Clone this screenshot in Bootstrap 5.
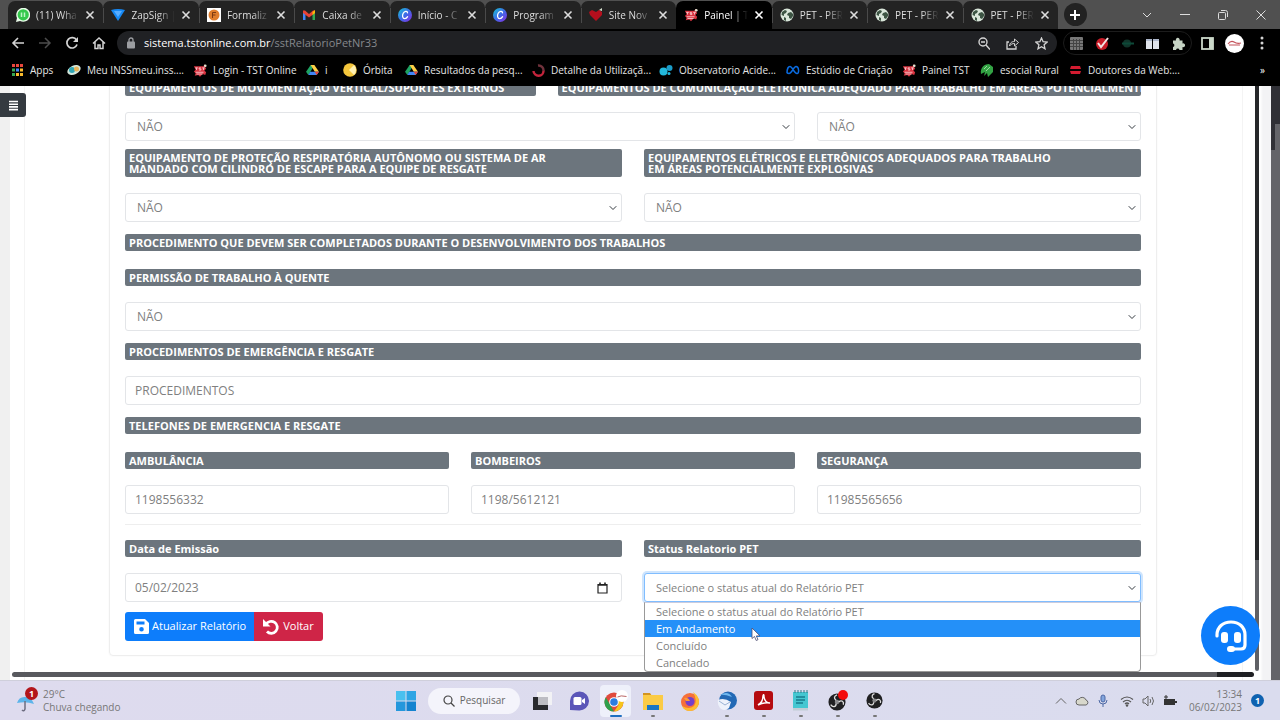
<!DOCTYPE html>
<html lang="pt-br">
<head>
<meta charset="utf-8">
<meta name="viewport" content="width=device-width, initial-scale=1">
<title>Painel | TST Online</title>
<link href="https://cdn.jsdelivr.net/npm/bootstrap@5.3.0/dist/css/bootstrap.min.css" rel="stylesheet">
<style>
body{font-family:"Open Sans","Noto Sans",sans-serif;font-size:12px;line-height:16px;background:#fff}
button{font-family:inherit}
svg{flex:none;display:block}
.bare{background:none;border:0;padding:0;color:inherit}
/* browser chrome */
.tabstrip{height:29px;background:#505050;padding-left:8px}
.tabitem{flex:1 1 0;min-width:0;height:28px;background:#232323;color:#ddd;padding:0 8px;gap:6px;border-radius:7px 7px 0 0;font-size:10px;position:relative}
.tabitem+.tabitem::before{content:"";position:absolute;left:0;top:7px;height:15px;border-left:1px solid #4a4a4a}
.tabitem.current{background:#000;color:#fff}
.tabitem.current::before{display:none}
.tabitem .caption{flex:1;min-width:0;overflow:hidden;white-space:nowrap;-webkit-mask-image:linear-gradient(90deg,#000 60%,transparent)}
.winctl{width:222px;color:#ddd}
.winctl>*{width:38px;display:flex;justify-content:center}
.newtab{width:23px!important;height:23px;border-radius:50%;background:#222!important;align-items:center;margin-left:6px;margin-right:41px}
.toolbar{height:28px;background:#000;color:#d4d4d4}
.navicons{width:117px;padding-left:11px;gap:13px}
.omnibox{flex:1;height:24px;border-radius:12px;background:#202124;padding:0 9px;font-size:11px;color:#85888c}
.omnibox .tools{color:#d4d4d4}
.exts{width:129px;height:24px;border:1px solid #1c1c1c;border-radius:12px;margin:0 9px 0 6px}
.avatar{margin-left:11px}
.bookmarks{height:29px;background:#000;display:grid;grid-template-columns:56px 126px 113px 37px 62px 127px 127px 127px 116px 78px 89px 1fr auto;align-items:center;padding:0 15px 3px 11px;font-size:10px}
.bookmarks a{color:#e6e6e6;text-decoration:none;display:flex;align-items:center;gap:6px;white-space:nowrap}
/* page */
.viewport{position:relative;overflow:hidden;flex:1 1 0;min-height:0}
.edge{width:10px;background:#f0f0f0}
.inner{margin:0 12px 0 14px;border:solid #f4f4f4;border-width:0 1px;padding:0 85px 24px 84px;overflow:hidden;min-width:0}
.formcard{border:1px solid #eee;border-radius:4px;padding:15px 15px 14px;box-shadow:0 0 2px #f3f3f3}
.formcard .row{--bs-gutter-x:22px}
.tag{display:block;background:#6c757d;color:#fff;font-weight:700;font-size:11px;line-height:11px;padding:3px 4px;border-radius:2px;overflow:hidden}
.tag.oneline{white-space:nowrap}
.gap-field{margin-bottom:16px}
.gap-tag{margin-bottom:18px}
.gap-next{margin-bottom:12px}
.gap-tight{margin-bottom:10px}
.field.form-control,.field.form-select{height:29px;padding:0 9px;border:1px solid #e3e5e8;border-radius:3px;font-size:12px;color:#808080;line-height:16px}
.field.form-select{padding-left:11px;background-size:8px 8px;background-position:right 4px center}
.field.opened{border-color:#80bdff;box-shadow:0 0 0 2px #cfe5fd}
.statusbox,.statusbox .field.form-select{font-size:11px}
.rule{margin:0 0 15px;border-top:1px solid #eee;opacity:1}
.choices{position:absolute;top:100%;left:0;right:0;z-index:5;background:#fff;border:1px solid #999;border-top-color:#ccd;border-radius:0 0 4px 4px;color:#808080;list-style:none;margin:0;padding:0}
.choices li{padding:0 11px;height:17px;line-height:17px}
.choices .on{background:#2490f8;color:#fff}
.pointer{position:absolute;left:107px;top:54px;z-index:6}
.act{height:29px;padding:0 9px;font-size:11px;border:0;border-radius:3px;display:flex;align-items:center;gap:3px;color:#fff!important}
.act.save{background:#0d7dfb}
.act.back{background:#cf2547}
.actions{margin-top:10px}
.menu{position:absolute;left:0;top:7px;width:26px;height:24px;background:#343a40;border:0;border-radius:0 3px 3px 0;padding:0}
.help{position:absolute;right:20px;bottom:15px;width:59px;height:59px;border-radius:50%;background:#0d7dfb;border:0;display:flex;align-items:center;justify-content:center;padding:0;z-index:6}
.vbar{width:4px;margin-bottom:9px;background:linear-gradient(#26272a 81%,#5f6065 81%);border-radius:0 0 2px 2px}
.hbar{position:absolute;left:12px;right:26px;bottom:3px;height:5px;border-radius:3px;background:linear-gradient(90deg,#58595e 97%,#1f2023 97%);z-index:2}
.lane{width:12px;background:linear-gradient(90deg,#fff 1px,#f3f3f5 4px)}
.outer{width:9px;background:linear-gradient(#303036 64px,#646469 64px);position:relative}
.outer::before{content:"";position:absolute;right:0;top:38px;width:5px;height:26px;background:#646469}
/* taskbar */
.taskbar{flex:none;height:40px;background:linear-gradient(90deg,#dedbee,#dadcee);border-top:1px solid #cfcfdb;font-size:10px;line-height:13px;color:#777}
.side{flex:1 1 0}
.apps>*{width:37px;display:flex;justify-content:center;align-items:center;height:34px;position:relative}
.apps .run::after{content:"";position:absolute;bottom:1px;width:4px;height:2px;border-radius:1px;background:#777}
.apps .front::before{content:"";position:absolute;inset:1px 3px;background:#eef0fa;border-radius:4px}
.apps .front::after{width:12px;background:#1f6fc0}
.apps svg{position:relative}
.apps .finder{width:92px;height:26px;border-radius:13px;background:#f4f4fb;margin:0 3px 0 4px;gap:5px;font-size:10px;color:#666}
.notice{background:#0f62b0;color:#fff;width:13px;height:13px;border-radius:50%;text-align:center;font-size:9px;font-weight:700;margin:0 16px 0 9px}
.alertdot{position:absolute;left:9px;top:-2px;width:13px;height:13px;border-radius:50%;background:#b3161b;color:#fff;text-align:center;font-size:9px;font-weight:700}
</style>
</head>
<body class="vh-100 d-flex flex-column overflow-hidden">
<svg width="0" height="0" class="position-absolute" aria-hidden="true">
<defs>
<linearGradient id="canvaFill" x1="0" y1="0" x2="1" y2="1"><stop offset="0" stop-color="#17c8d4"/><stop offset=".5" stop-color="#3d6be8"/><stop offset="1" stop-color="#8a2be2"/></linearGradient>
<symbol id="x" viewBox="0 0 10 10"><path d="M1.500 1.500l7 7m0-7l-7 7" stroke="currentColor" stroke-width="1.600"/></symbol>
<symbol id="canva" viewBox="0 0 14 14"><circle cx="7" cy="7" r="7" fill="url(#canvaFill)"/><path d="M9.500 4.800C9.300 2.600 6.400 3 5.200 5.300 3.900 7.800 4.600 10.600 6.700 10.600c1.400 0 2.300-.9 2.900-1.900" fill="none" stroke="#fff" stroke-width="1.300" stroke-linecap="round"/></symbol>
<symbol id="globe" viewBox="0 0 14 14"><circle cx="7" cy="7" r="6.500" fill="#d9e6da"/><path d="M2 4l3-2 2 1-1 2-2 1v2L1.500 7zM8 5l3-1 2 2v2l-2 3-2-1 0-2-2-1zM4 9l2 1v3l-2-1z" fill="#3d5544"/></symbol>
<symbol id="tst" viewBox="0 0 16 14"><path d="M1 2h11l1-2 2 1-1 2 1 2-2 2 2 2-1 3-3-1-3 3-2-2-4 1 1-3-2-2 2-2z" fill="#d93340"/><path d="M2.500 4h3M4 4v2.500M9 4H7v1.200h2v1.300H7M10.500 4h3M12 4v2.500M3 9h9M4 11h7" fill="none" stroke="#f8c9cd"/><circle cx="14" cy="1.500" r="1.500" fill="#dfe8d5"/></symbol>
<symbol id="drive" viewBox="0 0 14 13"><path d="M5 1h4l-4.500 8L2.500 12 0 8.500z" fill="#1ea362"/><path d="M5 1h4l5 7.500h-4.500z" fill="#ffcf45"/><path d="M4.500 8.500H14L11.500 12h-9z" fill="#4285f4"/><path d="M9.500 8.500H14L11.500 12z" fill="#ea4335"/></symbol>
<symbol id="obs" viewBox="0 0 20 20"><circle cx="10" cy="10" r="9.500" fill="#202022"/><circle cx="10" cy="10" r="2.500" fill="#89898c"/><path d="M9 8C6 6 7 3 10 2M12 10c3-3 6 0 5 3M9 12c0 4-4 4-6 1" fill="none" stroke="#ddd" stroke-width="1.500"/></symbol>
</defs>
</svg>

<header class="flex-shrink-0">
<div class="tabstrip d-flex align-items-end" role="tablist">
<div class="tabitem d-flex align-items-center" role="tab"><svg width="14" height="14" viewBox="0 0 14 14"><path d="M0 14l1-4a7 7 0 1 1 3 3z" fill="#e9fbe9"/><circle cx="7.200" cy="6.800" r="5.600" fill="#35c84c"/><path d="M5.500 4.500v4.500M8.500 4.500v4.500" stroke="#bdf5c5" stroke-width="1.500"/></svg><span class="caption">(11) Wha</span><button class="bare" aria-label="Fechar"><svg width="10" height="10"><use href="#x"/></svg></button></div>
<div class="tabitem d-flex align-items-center" role="tab"><svg width="14" height="14" viewBox="0 0 14 14"><path d="M0 2q7-2 14 0L7 13z" fill="#1689f5"/><path d="M3 3h8L7 9z" fill="#58adff"/></svg><span class="caption">ZapSign |</span><button class="bare" aria-label="Fechar"><svg width="10" height="10"><use href="#x"/></svg></button></div>
<div class="tabitem d-flex align-items-center" role="tab"><svg width="14" height="14" viewBox="0 0 14 14"><path d="M0 0h14v14H0z" fill="#fff"/><circle cx="7" cy="7" r="5.500" fill="#df7d2c"/><path d="M5.500 10V4.500h3.500M5.500 7h3" stroke="#7c3a12" fill="none"/></svg><span class="caption">Formaliz</span><button class="bare" aria-label="Fechar"><svg width="10" height="10"><use href="#x"/></svg></button></div>
<div class="tabitem d-flex align-items-center" role="tab"><svg width="14" height="14" viewBox="0 0 14 14"><path d="M1 12V4h2.500v8z" fill="#4285f4"/><path d="M10.500 12V4H13v8z" fill="#34a853"/><path d="M1 5V2.500l2 0 4 3.500 4-3.500 2 0V5L7 9.500z" fill="#ea4335"/><path d="M10.500 4L13 2v3l-2.500 2z" fill="#fbbc04"/></svg><span class="caption">Caixa de</span><button class="bare" aria-label="Fechar"><svg width="10" height="10"><use href="#x"/></svg></button></div>
<div class="tabitem d-flex align-items-center" role="tab"><svg width="14" height="14"><use href="#canva"/></svg><span class="caption">Início - C</span><button class="bare" aria-label="Fechar"><svg width="10" height="10"><use href="#x"/></svg></button></div>
<div class="tabitem d-flex align-items-center" role="tab"><svg width="14" height="14"><use href="#canva"/></svg><span class="caption">Program</span><button class="bare" aria-label="Fechar"><svg width="10" height="10"><use href="#x"/></svg></button></div>
<div class="tabitem d-flex align-items-center" role="tab"><svg width="14" height="14" viewBox="0 0 14 14"><path d="M7 13L1 7l-1-3 3-2 4 2 3-2 3 2v3z" fill="#b50f1d"/><path d="M10 2l3-2v3z" fill="#d5dfcc"/></svg><span class="caption">Site Nov</span><button class="bare" aria-label="Fechar"><svg width="10" height="10"><use href="#x"/></svg></button></div>
<div class="tabitem current d-flex align-items-center" role="tab" aria-selected="true"><svg width="14" height="14"><use href="#tst"/></svg><span class="caption">Painel | T</span><button class="bare" aria-label="Fechar"><svg width="10" height="10"><use href="#x"/></svg></button></div>
<div class="tabitem d-flex align-items-center" role="tab"><svg width="14" height="14"><use href="#globe"/></svg><span class="caption">PET - PER</span><button class="bare" aria-label="Fechar"><svg width="10" height="10"><use href="#x"/></svg></button></div>
<div class="tabitem d-flex align-items-center" role="tab"><svg width="14" height="14"><use href="#globe"/></svg><span class="caption">PET - PER</span><button class="bare" aria-label="Fechar"><svg width="10" height="10"><use href="#x"/></svg></button></div>
<div class="tabitem d-flex align-items-center" role="tab"><svg width="14" height="14"><use href="#globe"/></svg><span class="caption">PET - PER</span><button class="bare" aria-label="Fechar"><svg width="10" height="10"><use href="#x"/></svg></button></div>
<div class="winctl d-flex align-items-center align-self-center">
<button class="bare newtab" aria-label="Nova guia"><svg width="12" height="12" viewBox="0 0 12 12"><path d="M6 1v10M1 6h10" stroke="#fff" stroke-width="2"/></svg></button>
<button class="bare" aria-label="Pesquisar guias"><svg width="10" height="10" viewBox="0 0 10 10"><path d="M1 3l4 4 4-4" fill="none" stroke="currentColor"/></svg></button>
<button class="bare" aria-label="Minimizar"><svg width="10" height="10" viewBox="0 0 10 10"><path d="M0 4.500h10" stroke="currentColor"/></svg></button>
<button class="bare" aria-label="Restaurar"><svg width="10" height="10" viewBox="0 0 10 10"><rect x=".5" y="2.500" width="7" height="7" rx="1" fill="none" stroke="currentColor"/><path d="M3 .5h4.500a2 2 0 0 1 2 2V7" fill="none" stroke="currentColor"/></svg></button>
<button class="bare" aria-label="Fechar janela"><svg width="10" height="10" viewBox="0 0 10 10"><path d="M.5.5l9 9m0-9l-9 9" stroke="currentColor"/></svg></button>
</div>
</div>

<div class="toolbar d-flex align-items-center">
<div class="navicons d-flex align-items-center">
<button class="bare" aria-label="Voltar"><svg width="14" height="14" viewBox="0 0 14 14"><path d="M13 7H2m5-5L2 7l5 5" fill="none" stroke="currentColor" stroke-width="1.600"/></svg></button>
<button class="bare" aria-label="Avançar"><svg width="14" height="14" viewBox="0 0 14 14"><path d="M1 7h11M7 2l5 5-5 5" fill="none" stroke="#4c4c4c" stroke-width="1.500"/></svg></button>
<button class="bare" aria-label="Recarregar"><svg width="14" height="14" viewBox="0 0 14 14"><path d="M11.500 4A5.200 5.200 0 1 0 12 8.500" fill="none" stroke="currentColor" stroke-width="1.700"/><path d="M13 1v5H8z" fill="currentColor"/></svg></button>
<button class="bare" aria-label="Início"><svg width="14" height="14" viewBox="0 0 14 14"><path d="M1 7.500L7 2l6 5.500M3 6v6.500h3V9h2v3.500h3V6" fill="none" stroke="currentColor" stroke-width="1.500"/></svg></button>
</div>
<div class="omnibox d-flex align-items-center">
<svg width="10" height="12" viewBox="0 0 10 12" class="me-2"><rect x="1" y="4.500" width="8" height="7" rx="1" fill="#9c9ea2"/><path d="M3 5V3a2 2 0 0 1 4 0v2" fill="none" stroke="#9c9ea2" stroke-width="1.300"/></svg>
<span class="flex-grow-1" role="textbox" aria-label="Endereço"><span class="text-white">sistema.tstonline.com.br</span>/sstRelatorioPetNr33</span>
<div class="tools d-flex gap-3 align-items-center">
<svg width="12" height="13" viewBox="0 0 12 13"><circle cx="5" cy="5" r="4" fill="none" stroke="currentColor" stroke-width="1.400"/><path d="M8 8l4 4.500M3 5h4" stroke="currentColor" stroke-width="1.400"/></svg>
<svg width="13" height="13" viewBox="0 0 13 13"><path d="M3 5H1v7h9V9" fill="none" stroke="currentColor" stroke-width="1.300"/><path d="M3.500 9C4 5.500 6 4.500 8.500 4.500V2L12.500 5.500 8.500 9V6.500C6.500 6.500 5 7 3.500 9z" fill="none" stroke="currentColor"/></svg>
<svg width="13" height="13" viewBox="0 0 13 13"><path d="M6.500 1l1.600 3.700 4 .4-3 2.700.9 4-3.500-2.100L3 11.800l.9-4-3-2.700 4-.4z" fill="none" stroke="currentColor" stroke-width="1.300"/></svg>
</div></div>
<div class="exts d-flex align-items-center justify-content-around">
<svg width="13" height="13" viewBox="0 0 13 13"><rect width="13" height="13" rx="1" fill="#777"/><path d="M0 3.500h13M0 6.500h13M0 9.500h13M3.500 2v11M6.500 2v11M9.500 2v11" stroke="#444"/></svg>
<svg width="13" height="13" viewBox="0 0 13 13"><circle cx="6" cy="7" r="6" fill="#c71c28"/><path d="M2 6l3 4 7-9" fill="none" stroke="#f2e3e3" stroke-width="2"/></svg>
<svg width="13" height="13" viewBox="0 0 13 13"><circle cx="6" cy="6.500" r="4" fill="#10352a"/><path d="M1 6.500h12" stroke="#0d4938" stroke-width="2"/></svg>
<svg width="13" height="13" viewBox="0 0 13 13"><path d="M0 2h6v10H0zM7 2h6v10H7z" fill="#dfe3ea"/><path d="M0 2h6v2H0zM7 2h6v2H7z" fill="#aeb8cc"/></svg>
<svg width="13" height="13" viewBox="0 0 13 13"><path d="M1 3.500h3a1.900 1.900 0 1 1 3.500 0h3v3a1.900 1.900 0 1 1 0 3.500v3H7.500a1.800 1.800 0 0 0-3.500 0H1V10a1.800 1.800 0 0 0 0-3.500z" fill="#c6d3c4"/></svg>
</div>
<svg width="13" height="13" viewBox="0 0 13 13"><rect x="1" y="1" width="11" height="11" fill="none" stroke="#cbd8c9" stroke-width="1.800"/><path d="M8 1h4v11H8z" fill="#cbd8c9"/></svg>
<svg class="avatar" width="19" height="19" viewBox="0 0 19 19"><circle cx="9.500" cy="9.500" r="9.500" fill="#fff"/><path d="M3 10q3-4 6-2t7 1M4 11h11" fill="none" stroke="#c4525a" stroke-width="1.200"/></svg>
<svg width="4" height="14" viewBox="0 0 4 14" class="ms-3 me-3"><circle cx="2" cy="2" r="1.500" fill="currentColor"/><circle cx="2" cy="7" r="1.500" fill="currentColor"/><circle cx="2" cy="12" r="1.500" fill="currentColor"/></svg>
</div>

<nav class="bookmarks" aria-label="Favoritos">
<a href="#"><svg width="13" height="12" viewBox="0 0 13 12"><path d="M1 0h3v3H1zM5 0h3v3H5zM9 0h3v3H9z" fill="#e9473d"/><path d="M1 4.500h3v3H1z" fill="#35a853"/><path d="M5 4.500h3v3H5z" fill="#4285f4"/><path d="M9 4.500h3v3H9z" fill="#f9bb2d"/><path d="M1 9h3v3H1z" fill="#35a853"/><path d="M5 9h3v3H5zM9 9h3v3H9z" fill="#f9bb2d"/></svg>Apps</a>
<a href="#"><svg width="14" height="12" viewBox="0 0 14 12"><ellipse cx="7" cy="6" rx="7" ry="4.500" transform="rotate(-25 7 6)" fill="#d5e8dc"/><circle cx="5" cy="6" r="3" fill="#31a7b5"/><circle cx="9.500" cy="5" r="2.500" fill="#e8b45a"/></svg>Meu INSSmeu.inss....</a>
<a href="#"><svg width="14" height="13"><use href="#tst"/></svg>Login - TST Online</a>
<a href="#"><svg width="13" height="12"><use href="#drive"/></svg>i</a>
<a href="#"><svg width="14" height="14" viewBox="0 0 14 14"><circle cx="7" cy="7" r="6.800" fill="#f4c63c"/><path d="M11 2L6 7l5 5a7 7 0 0 0 0-10z" fill="#fff1b3"/></svg>Órbita</a>
<a href="#"><svg width="13" height="12"><use href="#drive"/></svg>Resultados da pesq...</a>
<a href="#"><svg width="13" height="13" viewBox="0 0 13 13"><path d="M1.500 7a5 5 0 0 0 10-.5" fill="none" stroke="#c4243c" stroke-width="2.400"/><path d="M6 1.500A5 5 0 0 1 11.500 7" fill="none" stroke="#71323c" stroke-width="2.400"/></svg>Detalhe da Utilizaçã...</a>
<a href="#"><svg width="14" height="12" viewBox="0 0 14 12"><circle cx="4.500" cy="7.500" r="4" fill="#22b8dc"/><circle cx="10.500" cy="4" r="3" fill="#1b9cc8"/><circle cx="10" cy="9.500" r="1.500" fill="#22b8dc"/></svg>Observatorio Acide...</a>
<a href="#"><svg width="14" height="10" viewBox="0 0 14 10"><path d="M1 8C1 4 2.500 1.500 4 1.500 6.500 1.500 8 8.500 11 8.500c2.500 0 2-7-1-7-2.500 0-4 7-7 7C1.500 8.500 1 8 1 7" fill="none" stroke="#0a6be0" stroke-width="1.500"/></svg>Estúdio de Criação</a>
<a href="#"><svg width="14" height="13"><use href="#tst"/></svg>Painel TST</a>
<a href="#"><svg width="14" height="13" viewBox="0 0 14 13"><path d="M1 10C0 4 4 0 9 0l4 3v5l-5 5-1-4-3 3 1-4z" fill="#33a344"/><path d="M4 5l3-3M6 7l4-4" stroke="#9bd7a0"/></svg>esocial Rural</a>
<a href="#"><svg width="13" height="12" viewBox="0 0 13 12"><path d="M2 2h9l1 3H1zM1 7h11l-1 3H2z" fill="#d31b30"/></svg>Doutores da Web:...</a>
<button class="bare text-white" aria-label="Mais favoritos">»</button>
</nav>
</header>

<main class="viewport d-flex">
<div class="edge"></div>
<button class="menu" aria-label="Menu"><svg width="11" height="11" viewBox="0 0 11 11" class="mx-auto"><path d="M1 1.500h9M1 4.200h9M1 6.900h9M1 9.600h9" stroke="#fff" stroke-width="1.600"/></svg></button>
<div class="inner flex-fill d-flex flex-column justify-content-end">
<form class="formcard">
<div class="row gap-field">
<div class="col-5"><label class="tag oneline" for="movimentacao">EQUIPAMENTOS DE MOVIMENTAÇÃO VERTICAL/SUPORTES EXTERNOS</label></div>
<div class="col-7"><label class="tag oneline" for="comunicacao">EQUIPAMENTOS DE COMUNICAÇÃO ELETRÔNICA ADEQUADO PARA TRABALHO EM ÁREAS POTENCIALMENTE</label></div>
</div>
<div class="row mb-2">
<div class="col-8"><select class="form-select field" id="movimentacao"><option>NÃO</option></select></div>
<div class="col-4"><select class="form-select field" id="comunicacao"><option>NÃO</option></select></div>
</div>
<div class="row gap-next">
<div class="col-6"><label class="tag gap-field" for="respiratoria">EQUIPAMENTO DE PROTEÇÃO RESPIRATÓRIA AUTÔNOMO OU SISTEMA DE AR<br>MANDADO COM CILINDRO DE ESCAPE PARA A EQUIPE DE RESGATE</label><select class="form-select field" id="respiratoria"><option>NÃO</option></select></div>
<div class="col-6"><label class="tag gap-field" for="eletricos">EQUIPAMENTOS ELÉTRICOS E ELETRÔNICOS ADEQUADOS PARA TRABALHO<br>EM ÁREAS POTENCIALMENTE EXPLOSIVAS</label><select class="form-select field" id="eletricos"><option>NÃO</option></select></div>
</div>
<div class="tag gap-tag">PROCEDIMENTO QUE DEVEM SER COMPLETADOS DURANTE O DESENVOLVIMENTO DOS TRABALHOS</div>
<div class="gap-next"><label class="tag gap-field" for="quente">PERMISSÃO DE TRABALHO À QUENTE</label><select class="form-select field" id="quente"><option>NÃO</option></select></div>
<div class="gap-next"><label class="tag gap-field" for="emergencia">PROCEDIMENTOS DE EMERGÊNCIA E RESGATE</label><input class="form-control field" id="emergencia" value="PROCEDIMENTOS"></div>
<div class="tag gap-tag">TELEFONES DE EMERGENCIA E RESGATE</div>
<div class="row gap-tight">
<div class="col-4"><label class="tag gap-field" for="ambulancia">AMBULÂNCIA</label><input class="form-control field" id="ambulancia" value="1198556332"></div>
<div class="col-4"><label class="tag gap-field" for="bombeiros">BOMBEIROS</label><input class="form-control field" id="bombeiros" value="1198/5612121"></div>
<div class="col-4"><label class="tag gap-field" for="seguranca">SEGURANÇA</label><input class="form-control field" id="seguranca" value="11985565656"></div>
</div>
<hr class="rule">
<div class="row">
<div class="col-6"><label class="tag gap-field" for="emissao">Data de Emissão</label><div class="form-control field d-flex align-items-center"><input class="bare flex-grow-1" id="emissao" value="05/02/2023"><svg width="11" height="12" viewBox="0 0 11 12" class="me-1"><path d="M1 2.500h9v8.500H1z" fill="none" stroke="#222" stroke-width="1.200"/><path d="M1 3h9M3 .5v2M8 .5v2" stroke="#222" stroke-width="1.600"/></svg></div></div>
<div class="col-6"><label class="tag gap-field" for="status">Status Relatorio PET</label>
<div class="position-relative statusbox"><select class="form-select field opened" id="status"><option>Selecione o status atual do Relatório PET</option></select>
<ul class="choices" role="listbox" aria-label="Status"><li role="option">Selecione o status atual do Relatório PET</li><li class="on" role="option" aria-selected="true">Em Andamento</li><li role="option">Concluído</li><li role="option">Cancelado</li></ul>
<svg class="pointer" width="10" height="15" viewBox="0 0 10 15"><path d="M1 1v10.500l2.500-2 1.700 4 1.800-.8-1.700-3.800H9z" fill="#fff" stroke="#4c4c70" stroke-width=".8"/></svg></div></div>
</div>
<div class="btn-group actions">
<button type="button" class="btn act save"><svg width="15" height="15" viewBox="0 0 15 15"><path fill-rule="evenodd" d="M1.500 0H11l4 4v9.500a1.500 1.500 0 0 1-1.500 1.500h-12A1.500 1.500 0 0 1 0 13.500v-12A1.500 1.500 0 0 1 1.500 0zM2.500 2.500v3h8v-3zM7.500 8a2.300 2.300 0 1 0 0 4.600 2.300 2.300 0 0 0 0-4.600z" fill="#fff"/></svg>Atualizar Relatório</button>
<button type="button" class="btn act back"><svg width="17" height="16" viewBox="0 0 17 16"><path d="M3 5.500A6 6 0 1 1 4 12.500" fill="none" stroke="#fff" stroke-width="2.800"/><path d="M0 0v7.500h7.500z" fill="#fff"/></svg>Voltar</button>
</div>
</form>
</div>
<div class="vbar"></div>
<div class="lane"></div>
<div class="outer"></div>
<div class="hbar"></div>
<button class="help" aria-label="Suporte"><svg width="32" height="32" viewBox="0 0 32 32"><path d="M2 16v-1C2 7 8 2 16 2s14 5 14 13v10q0 4-4 4h-9" fill="none" stroke="#fff" stroke-width="3.200" stroke-linecap="round"/><rect x="6" y="12" width="7" height="11" rx="3" fill="#fff"/><rect x="19" y="12" width="7" height="11" rx="3" fill="#fff"/><rect x="12" y="26" width="8" height="6" rx="3" fill="#fff"/></svg></button>
</main>

<footer class="taskbar d-flex align-items-center">
<div class="side d-flex align-items-center">
<div class="position-relative ms-3 me-2"><svg width="19" height="24" viewBox="0 0 19 24"><path d="M1 14Q3 7 10 8q6 1 8 7-8-3-17-1z" fill="#5db4ea"/><path d="M9 12v8q-1 3-3 1" fill="none" stroke="#6d6d80" stroke-width="1.500"/></svg><span class="alertdot">1</span></div>
<div>29°C<br>Chuva chegando</div>
</div>
<div class="apps d-flex align-items-center">
<button class="bare" aria-label="Iniciar"><svg width="20" height="20" viewBox="0 0 20 20"><path d="M0 0h9.500v9.500H0z" fill="#49c0ef"/><path d="M10.500 0H20v9.500h-9.500z" fill="#2ea5e4"/><path d="M0 10.500h9.500V20H0z" fill="#2497dc"/><path d="M10.500 10.500H20V20h-9.500z" fill="#1483cf"/></svg></button>
<button class="bare finder"><svg width="12" height="12" viewBox="0 0 12 12"><circle cx="5" cy="5" r="4" fill="none" stroke="#444" stroke-width="1.200"/><path d="M8 8l3.500 3.500" stroke="#444" stroke-width="1.300"/></svg>Pesquisar</button>
<span><svg width="20" height="20" viewBox="0 0 20 20"><path d="M5 1h15v13H5z" fill="#f2f2f5"/><path d="M1 6h5v8h10v5H1z" fill="#292a2e"/><path d="M6 6h10v8H6z" fill="#bdbdc3"/></svg></span>
<span><svg width="20" height="20" viewBox="0 0 20 20"><path d="M1 19V10a9.500 9.500 0 1 1 9 9.500z" fill="#5b56b8"/><rect x="4.500" y="6" width="8" height="8" rx="1.500" fill="#fff"/><path d="M13 9l3-2v6l-3-2z" fill="#fff"/></svg></span>
<span class="run front"><svg width="24" height="22" viewBox="0 0 24 22"><circle cx="10" cy="12" r="9.500" fill="#e04a3d"/><path d="M1.800 7.200L10 21.500A9.500 9.500 0 0 1 1.800 7.200z" fill="#2fa14c"/><path d="M18.500 8H10l4.500 7L10 21.500A9.500 9.500 0 0 0 18.500 8z" fill="#f6c51c"/><circle cx="10" cy="12" r="4.800" fill="#fff"/><circle cx="10" cy="12" r="3.800" fill="#2b7de0"/><circle cx="18" cy="6" r="6" fill="#fff"/><path d="M13.500 7q3-2 9-.5" stroke="#b66" fill="none"/></svg></span>
<span class="run"><svg width="20" height="20" viewBox="0 0 20 20"><path d="M0 2h7l2 3H0z" fill="#d3941f"/><path d="M0 4h20v15H0z" fill="#fbcb45"/><path d="M4 14h12v5H4z" fill="#1976c4"/></svg></span>
<span><svg width="20" height="20" viewBox="0 0 20 20"><circle cx="10" cy="11" r="9" fill="#f6703a"/><path d="M13 1q7 5 6 11-2 8-9 8-6 0-8-5 7 4 12 0 4-5-1-14z" fill="#fdbd2f"/><circle cx="10" cy="10.500" r="4.500" fill="#7540c8"/><path d="M4 7q4-1 6 3H6z" fill="#ff9a35"/></svg></span>
<span class="run"><svg width="20" height="20" viewBox="0 0 20 20"><circle cx="11" cy="9.500" r="9" fill="#2369b5"/><path d="M3 4q8-5 12 2-8-3-12-2z" fill="#6fb8ef"/><path d="M1 9q6-3 13 2l-2 6q-5 4-9 0-3-4-2-8z" fill="#eef2fb"/><path d="M2 10l6 4 5-3" fill="none" stroke="#9bb3d4"/></svg></span>
<span class="run"><svg width="19" height="19" viewBox="0 0 19 19"><rect width="19" height="19" rx="3" fill="#b50b0f"/><path d="M4 14q5-3 5-9 1-3 1 1 1 6 6 6-6-1-12 2z" fill="none" stroke="#fff" stroke-width="1.500"/></svg></span>
<span class="run"><svg width="17" height="21" viewBox="0 0 17 21"><path d="M1 2h15v18H1z" fill="#45c7d1"/><path d="M1 18h15v2.500H1z" fill="#c1cdd5"/><path d="M3 0v3M6 0v3M9 0v3M12 0v3M15 0v3" stroke="#337887"/><path d="M4 7h9M4 10h9M4 13h7" stroke="#187c8d" stroke-width="1.300"/></svg></span>
<span class="run"><svg width="20" height="22" viewBox="0 0 20 22"><use href="#obs" x="0" y="3" width="18" height="18"/><circle cx="15" cy="5" r="5" fill="#f40b0b"/></svg></span>
<span class="run"><svg width="17" height="17"><use href="#obs"/></svg></span>
</div>
<div class="side d-flex align-items-center justify-content-end">
<svg width="12" height="12" viewBox="0 0 12 12"><path d="M1 8.500L6 3.500l5 5" fill="none" stroke="#666"/></svg>
<svg width="15" height="12" viewBox="0 0 15 12" class="ms-2"><path d="M4 10a3 3 0 0 1 0-6 4 4 0 0 1 7 1 2.600 2.600 0 0 1 0 5z" fill="#d8d8cc" stroke="#666"/></svg>
<svg width="10" height="14" viewBox="0 0 10 14" class="ms-2 me-1"><rect x="3" y="1" width="4" height="7" rx="2" fill="#83a5dc" stroke="#4c68a4"/><path d="M1 6q0 4 4 4t4-4M5 10v3" fill="none" stroke="#4c68a4"/></svg>
<svg width="14" height="12" viewBox="0 0 14 12" class="ms-2"><path d="M1 4.500q6-5 12 0M3 7q4-3.500 8 0M5 9q2-2 4 0" fill="none" stroke="#555" stroke-width="1.200"/><circle cx="7" cy="10.500" r="1.200" fill="#555"/></svg>
<svg width="13" height="12" viewBox="0 0 13 12" class="ms-2"><path d="M1 4h2l3-3v10L3 8H1zM8 4q1.500 2 0 4M10 2q3 4 0 8" fill="none" stroke="#666"/></svg>
<svg width="14" height="12" viewBox="0 0 14 12" class="ms-2"><path d="M1 4h11v6H1z" fill="#333"/><path d="M12 6h2v2h-2z" fill="#333"/><path d="M3 0v5M1 2h4" stroke="#333"/></svg>
<div class="text-end ms-2 ps-1">13:34<br>06/02/2023</div>
<span class="notice">1</span>
</div>
</footer>
<script src="https://cdn.jsdelivr.net/npm/bootstrap@5.3.0/dist/js/bootstrap.bundle.min.js"></script>
</body>
</html>
